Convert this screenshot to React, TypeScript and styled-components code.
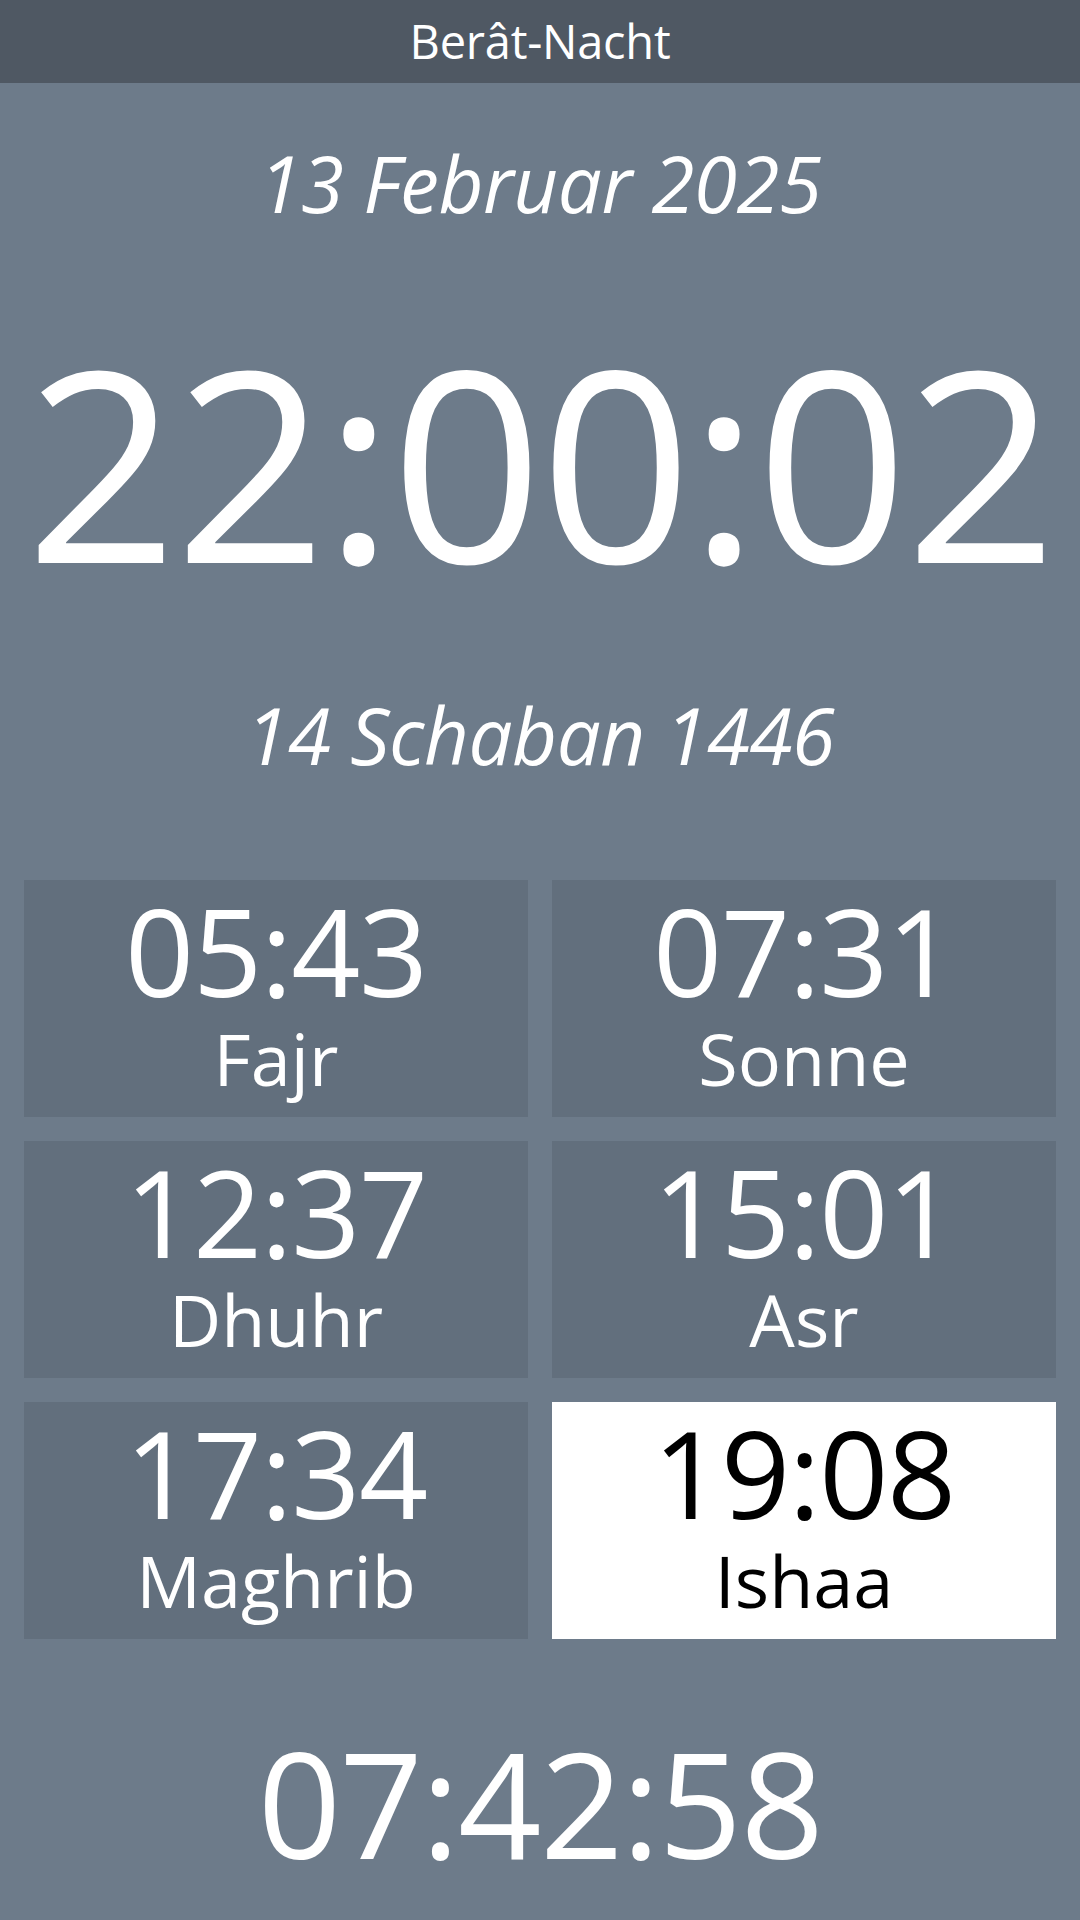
import React from "react";
import styled, { createGlobalStyle } from "styled-components";

const Global = createGlobalStyle`
  html, body { margin: 0; padding: 0; }
  body {
    background: #6d7b8a;
    font-family: "Open Sans", "Noto Sans", sans-serif;
    color: #ffffff;
  }
`;

const Page = styled.div`
  width: 1080px;
  height: 1920px;
  background: #6d7b8a;
  display: flex;
  flex-direction: column;
  align-items: stretch;
  overflow: hidden;
`;

const Header = styled.header`
  height: 83px;
  background: #4f5863;
  display: flex;
  align-items: center;
  justify-content: center;
  font-size: 47px;
  line-height: 83px;
  letter-spacing: -0.005em;
  color: #ffffff;
`;

const DateLine = styled.div<{ $top: number }>`
  margin-top: ${(p) => p.$top}px;
  font-size: 78px;
  line-height: 78px;
  font-style: italic;
  font-weight: 400;
  letter-spacing: -0.006em;
  text-align: center;
`;

const Clock = styled.div`
  margin-top: 105px;
  font-size: 266px;
  line-height: 266px;
  letter-spacing: -0.011em;
  text-align: center;
`;

const Grid = styled.div`
  margin-top: 106px;
  padding: 0 24px;
  display: grid;
  grid-template-columns: 1fr 1fr;
  grid-auto-rows: 237px;
  gap: 24px;
`;

const Card = styled.div<{ $active?: boolean }>`
  background: ${(p) => (p.$active ? "#ffffff" : "#626f7d")};
  color: ${(p) => (p.$active ? "#000000" : "#ffffff")};
  display: flex;
  flex-direction: column;
  align-items: center;
  padding-top: 10px;
  box-sizing: border-box;
`;

const Time = styled.div`
  font-size: 121px;
  line-height: 121px;
  letter-spacing: -0.011em;
`;

const Name = styled.div`
  margin-top: 11px;
  font-size: 72px;
  line-height: 72px;
`;

const Countdown = styled.div`
  margin-top: 91px;
  font-size: 146px;
  line-height: 146px;
  letter-spacing: -0.011em;
  text-align: center;
`;

const prayers = [
  { time: "05:43", name: "Fajr" },
  { time: "07:31", name: "Sonne" },
  { time: "12:37", name: "Dhuhr" },
  { time: "15:01", name: "Asr" },
  { time: "17:34", name: "Maghrib" },
  { time: "19:08", name: "Ishaa", active: true },
];

export default function App() {
  return (
    <Page>
      <Global />
      <Header>Berât-Nacht</Header>
      <DateLine $top={61}>13 Februar 2025</DateLine>
      <Clock>22:00:02</Clock>
      <DateLine $top={103}>14 Schaban 1446</DateLine>
      <Grid>
        {prayers.map((p) => (
          <Card key={p.name} $active={p.active}>
            <Time>{p.time}</Time>
            <Name>{p.name}</Name>
          </Card>
        ))}
      </Grid>
      <Countdown>07:42:58</Countdown>
    </Page>
  );
}
